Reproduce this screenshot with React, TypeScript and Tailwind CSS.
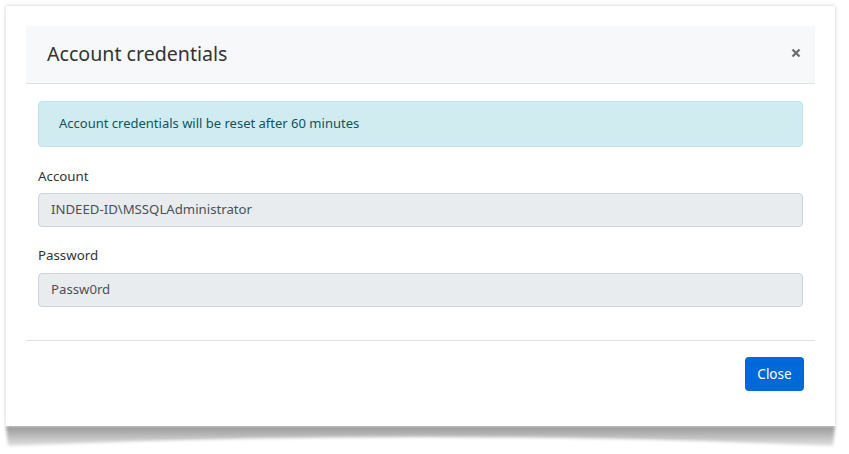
import React from "react";

export default function App() {
  const font = { fontFamily: '"Noto Sans", "Open Sans", sans-serif' };
  return (
    <div className="w-[849px] h-[454px] bg-white overflow-hidden pt-[6px] pl-[6px]" style={font}>
      <div className="w-[829px] h-[420px] bg-white shadow-[0_0_4px_rgba(0,0,0,0.22)] p-[20px]">
        <div className="flex flex-col">
          <div className="h-[58px] bg-[#f7f8fa] border-b border-[#dee2e6] flex items-center justify-between pl-[21px] pr-[14px]">
            <div className="text-[19.6px] text-[#333] leading-none pb-[2px]">Account credentials</div>
            <svg width="10" height="10" viewBox="0 0 10 10" className="mb-[4px]">
              <path d="M1.5 1.5 L8.5 8.5 M8.5 1.5 L1.5 8.5" stroke="#6c6c6c" strokeWidth="2.2" />
            </svg>
          </div>
          <div className="px-[12px] pt-[17px] pb-[33px] flex flex-col">
            <div className="h-[46px] bg-[#d1ecf1] border border-[#bee5eb] rounded-[4px] flex items-center pl-[20px] text-[13px] text-[#0c5460]">
              Account credentials will be reset after 60 minutes
            </div>
            <div className="mt-[20px] text-[13.3px] text-[#333] leading-[18px]">Account</div>
            <div className="mt-[8px] h-[34px] bg-[#e9ecef] border border-[#ced4da] rounded-[4px] flex items-center pl-[12px] text-[13.2px] text-[#495057]">
              INDEED-ID\MSSQLAdministrator
            </div>
            <div className="mt-[19px] text-[13.3px] text-[#333] leading-[18px]">Password</div>
            <div className="mt-[9px] h-[34px] bg-[#e9ecef] border border-[#ced4da] rounded-[4px] flex items-center pl-[12px] text-[13.2px] text-[#495057]">
              Passw0rd
            </div>
          </div>
          <div className="border-t border-[#dee2e6] flex justify-end pt-[16px] pr-[11px]">
            <button className="w-[59px] h-[34px] bg-[#0069d9] rounded-[4px] text-white text-[13.5px] flex items-center justify-center">
              Close
            </button>
          </div>
        </div>
      </div>
      <svg width="835" height="26" viewBox="0 0 835 26" className="-ml-[3px] block">
        <defs>
          <linearGradient id="g" x1="0" y1="0" x2="0" y2="1">
            <stop offset="0" stopColor="#959595" />
            <stop offset="1" stopColor="#e2e2e2" />
          </linearGradient>
          <filter id="b" x="-5%" y="-50%" width="110%" height="200%">
            <feGaussianBlur stdDeviation="1.6" />
          </filter>
        </defs>
        <path d="M3 0 L832 0 L830 20 Q417 2 5 20 Z" fill="url(#g)" filter="url(#b)" />
      </svg>
    </div>
  );
}
